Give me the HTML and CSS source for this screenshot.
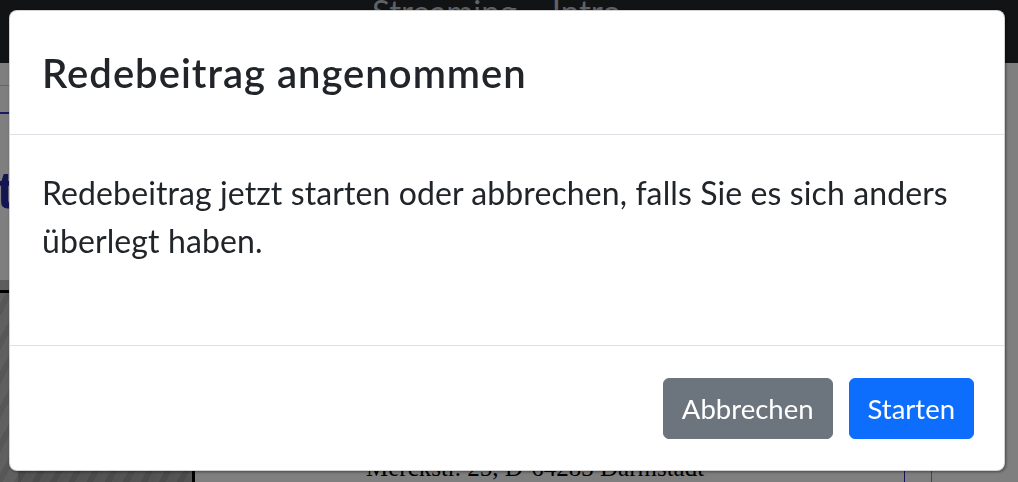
FILE: index.html
```html
<!DOCTYPE html>
<html lang="de">
<head>
<meta charset="utf-8">
<title>Redebeitrag</title>
<link rel="stylesheet" href="styles.css">
</head>
<body>
<div class="page">
  <nav class="navbar">
    <a class="nav-link">Streaming</a>
    <a class="nav-link">Intro</a>
  </nav>
  <div class="content">
    <aside class="sidebar">
      <div class="side-top">
        <div class="side-rule"></div>
        <div class="side-navy"></div>
        <div class="side-heading">t</div>
      </div>
      <div class="side-band"></div>
      <div class="side-image"></div>
    </aside>
    <main class="main">
      <p class="address">Merckstr. 25, D-64283 Darmstadt</p>
    </main>
    <div class="aside-col"></div>
    <div class="rest-col"></div>
  </div>
</div>
<div class="backdrop"></div>
<div class="modal" role="dialog">
  <div class="modal-content">
    <div class="modal-header">
      <h5 class="modal-title">Redebeitrag angenommen</h5>
    </div>
    <div class="modal-body">
      <p>Redebeitrag jetzt starten oder abbrechen, falls Sie es sich anders überlegt haben.</p>
    </div>
    <div class="modal-footer">
      <button class="btn btn-secondary">Abbrechen</button>
      <button class="btn btn-primary">Starten</button>
    </div>
  </div>
</div>
</body>
</html>
```
FILE: styles.css
```css
* { box-sizing: border-box; }
html, body { margin: 0; padding: 0; }
body {
  width: 1018px;
  height: 482px;
  overflow: hidden;
  font-family: Lato, "Open Sans", sans-serif;
  background: #fff;
}

/* ---------- page under the backdrop ---------- */
.page {
  width: 1018px;
  height: 482px;
  display: flex;
  flex-direction: column;
}
.navbar {
  height: 63px;
  flex: 0 0 63px;
  background: #23262a;
  display: flex;
  align-items: flex-start;
  gap: 35px;
  padding-left: 372px;
}
.nav-link {
  font-size: 33px;
  line-height: 22px;
  color: #c2c5ca;
}
.content {
  flex: 1;
  display: flex;
}
.sidebar {
  width: 195px;
  border-right: 3px solid #000;
  display: flex;
  flex-direction: column;
}
.side-top {
  height: 217px;
  background: #fff;
  padding-top: 22px;
}
.side-rule {
  height: 1px;
  background: #c8ccd8;
}
.side-navy {
  height: 2px;
  margin-top: 26px;
  background: #3535c8;
}
.side-heading {
  font-family: "Liberation Sans", Arial, sans-serif;
  font-weight: 700;
  font-size: 52px;
  line-height: 60px;
  margin-top: 46px;
  margin-left: -3px;
  color: #2a2aa8;
}
.side-band {
  height: 10px;
  background: #b8b8b8;
  border-bottom: 3px solid #000;
  box-sizing: content-box;
}
.side-image {
  flex: 1;
  background:
    repeating-linear-gradient(118deg, rgba(255,255,255,0.08) 0 5px, rgba(0,0,0,0.07) 5px 11px, rgba(255,255,255,0.04) 11px 16px),
    linear-gradient(90deg, #bcbcbc 0 18px, #a2a2a2 18px 100%);
}
.main {
  width: 710px;
  border-right: 1px solid #2a2ab0;
  display: flex;
  flex-direction: column;
  justify-content: flex-end;
  padding-left: 171px;
  padding-bottom: 2px;
}
.address {
  margin: 0;
  font-family: "Liberation Serif", "Times New Roman", serif;
  font-size: 25px;
  line-height: 24px;
  color: #000;
  white-space: nowrap;
}
.aside-col {
  width: 27px;
  border-right: 1px solid #7c90aa;
}
.rest-col { flex: 1; }

/* ---------- backdrop ---------- */
.backdrop {
  position: fixed;
  inset: 0;
  background: rgba(0, 0, 0, 0.5);
}

/* ---------- modal ---------- */
.modal {
  position: fixed;
  top: 10px;
  left: 9px;
  width: 996px;
  height: 461px;
}
.modal-content {
  height: 100%;
  display: flex;
  flex-direction: column;
  background: #fff;
  border: 1px solid rgba(0, 0, 0, 0.175);
  border-radius: 8px;
  box-shadow: 1px 1px 3px rgba(0, 0, 0, 0.45);
  color: #212529;
}
.modal-header {
  height: 124px;
  flex: 0 0 124px;
  display: flex;
  align-items: center;
  padding: 0 32px;
  border-bottom: 1px solid #dee2e6;
}
.modal-title {
  margin: 0;
  font-size: 40px;
  font-weight: 600;
  letter-spacing: 1px;
  line-height: 60px;
}
.modal-body {
  height: 210px;
  flex: 0 0 210px;
  padding: 34px 32px 0;
}
.modal-body p {
  margin: 0;
  font-size: 32px;
  letter-spacing: 0.1px;
  line-height: 48px;
}
.modal-footer {
  flex: 1;
  display: flex;
  justify-content: flex-end;
  align-items: center;
  gap: 16px;
  padding: 0 30px;
  border-top: 1px solid #dee2e6;
}
.btn {
  font-family: inherit;
  font-size: 27.5px;
  line-height: 41px;
  padding: 9px 18px;
  border: 1px solid transparent;
  border-radius: 6px;
  color: #fff;
  cursor: pointer;
}
.btn-secondary { background: #6c757d; border-color: #6c757d; }
.btn-primary { background: #0d6efd; border-color: #0d6efd; }
```
